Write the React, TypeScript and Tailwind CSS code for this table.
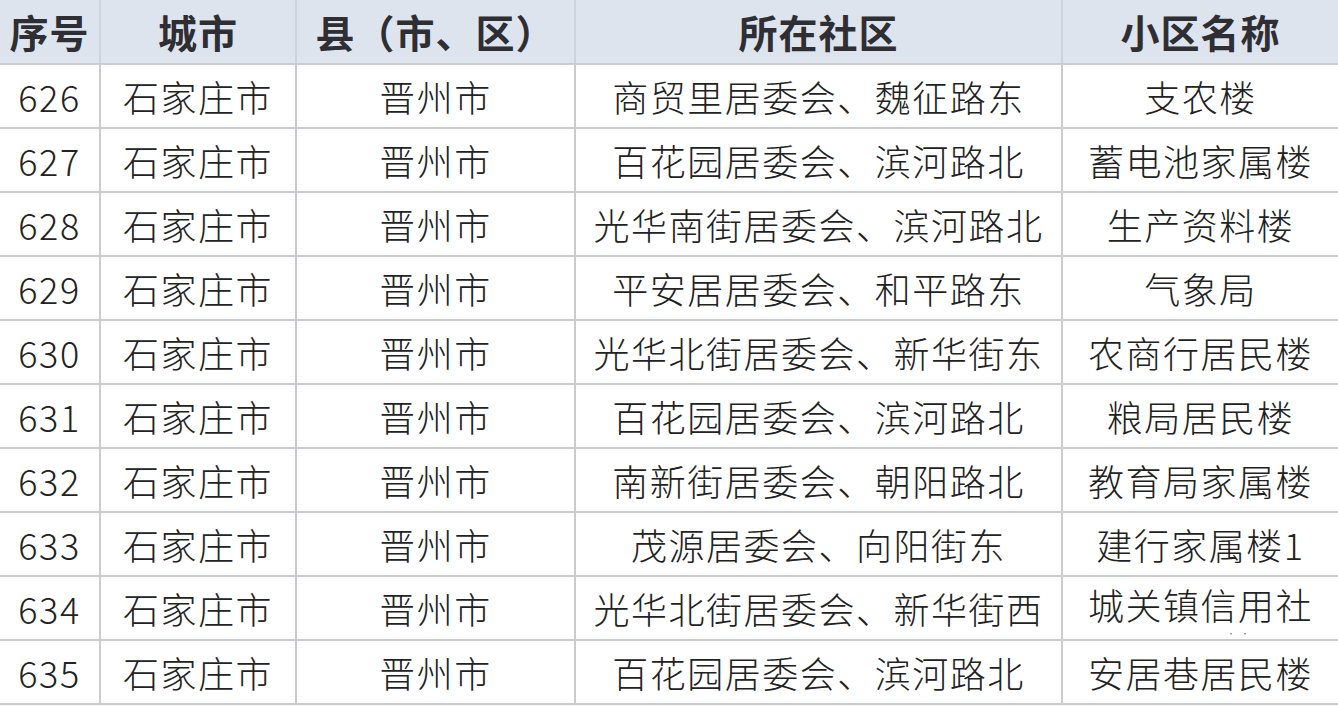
import React from "react";

const rows: [string, string, string, string, string][] = [
  ["626", "石家庄市", "晋州市", "商贸里居委会、魏征路东", "支农楼"],
  ["627", "石家庄市", "晋州市", "百花园居委会、滨河路北", "蓄电池家属楼"],
  ["628", "石家庄市", "晋州市", "光华南街居委会、滨河路北", "生产资料楼"],
  ["629", "石家庄市", "晋州市", "平安居居委会、和平路东", "气象局"],
  ["630", "石家庄市", "晋州市", "光华北街居委会、新华街东", "农商行居民楼"],
  ["631", "石家庄市", "晋州市", "百花园居委会、滨河路北", "粮局居民楼"],
  ["632", "石家庄市", "晋州市", "南新街居委会、朝阳路北", "教育局家属楼"],
  ["633", "石家庄市", "晋州市", "茂源居委会、向阳街东", "建行家属楼1"],
  ["634", "石家庄市", "晋州市", "光华北街居委会、新华街西", "城关镇信用社"],
  ["635", "石家庄市", "晋州市", "百花园居委会、滨河路北", "安居巷居民楼"],
];

const headers = ["序号", "城市", "县（市、区）", "所在社区", "小区名称"];
const widths = ["w-[101px]", "w-[196px]", "w-[279px]", "w-[487px]", "w-[275px]"];

export default function App() {
  return (
    <div
      className="w-[1338px] h-[706px] overflow-hidden bg-[#f4f5f7]"
      style={{ fontFamily: '"Noto Sans CJK SC", "Noto Sans", sans-serif' }}
    >
      <div className="flex h-[65px] bg-[#dde4ee] border-b-2 border-[#c9cdd2]">
        {headers.map((h, i) => (
          <div
            key={i}
            className={`${widths[i]} shrink-0 flex items-center justify-center text-[39px] font-bold text-[#2e2e33] tracking-[1px] ${i < 4 ? "border-r-2 border-[#cdd3da]" : ""}`}
          >
            {h}
          </div>
        ))}
      </div>
      {rows.map((r, ri) => (
        <div key={ri} className="flex h-[64px] border-b-2 border-[#c9cbcf]">
          {r.map((c, ci) => (
            <div
              key={ci}
              className={`${widths[ci]} shrink-0 relative flex items-center justify-center bg-white text-[36px] font-light text-[#222] tracking-[1.5px] ${ci < 4 ? "border-r-2 border-[#c9cbcf]" : ""}`}
            >
              <span className={`leading-[40px] ${ri === 8 && ci === 4 ? "-mt-[8px]" : ""}`}>{c}</span>
              {ri === 8 && ci === 4 && (
                <span className="absolute bottom-[1px] left-[164px] text-[8px] leading-[8px] tracking-[6px] text-[#666]">··</span>
              )}
            </div>
          ))}
        </div>
      ))}
    </div>
  );
}
